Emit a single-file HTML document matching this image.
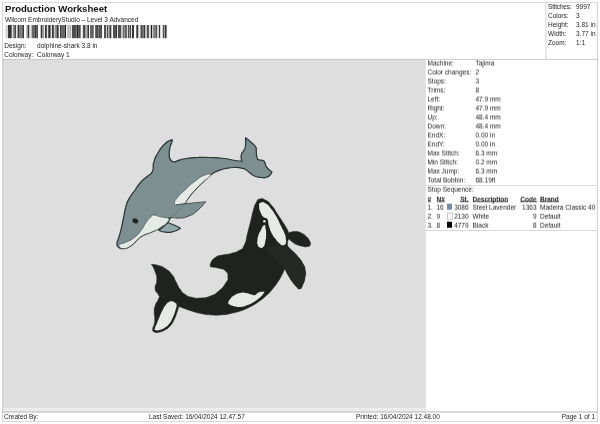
<!DOCTYPE html>
<html>
<head>
<meta charset="utf-8">
<title>Production Worksheet</title>
<style>
html,body{margin:0;padding:0;}
body{width:600px;height:424px;background:#fff;position:relative;overflow:hidden;
 font-family:"Liberation Sans",sans-serif;color:#222;font-size:6.5px;line-height:9px;}
.abs{position:absolute;}
.t{position:absolute;white-space:nowrap;height:9px;line-height:9px;}
.hl{position:absolute;height:1px;background:#d0d0d0;}
.vl{position:absolute;width:1px;background:#d0d0d0;}
#title{left:5px;top:3px;transform:translateY(-0.3px);font-size:9.6px;font-weight:bold;line-height:12px;height:12px;color:#111;}
#canvas{left:3px;top:59px;width:423px;height:350px;background:#dedede;}
u{text-decoration:none;font-weight:bold;display:inline-block;line-height:9px;background:linear-gradient(#2a2a2a,#2a2a2a) no-repeat 0 7.1px / 100% 0.8px;}
.r{text-align:right;}
.g{position:absolute;left:0;top:0;width:600px;height:424px;transform-origin:300px 212px;will-change:transform;}
</style>
</head>
<body>
<!-- frame -->
<svg class="abs" style="left:0;top:0" width="600" height="424" viewBox="0 0 600 424">
<rect x="3" y="59.3" width="422.6" height="349.1" fill="#dedede"/>
<rect x="3" y="408.4" width="422.6" height="3.2" fill="#ebebeb"/>
<rect x="2.6" y="58.9" width="423" height="0.8" fill="#bdbdbd"/>
<rect x="2.4" y="59" width="0.8" height="352.6" fill="#bdbdbd"/>
<rect x="425" y="59.5" width="0.9" height="352" fill="#e4e4e4"/>
<g fill="#d0d0d0">
<rect x="2" y="2" width="596" height="0.8"/>
<rect x="2" y="2" width="0.9" height="420"/>
<rect x="596.8" y="2" width="1.1" height="420"/>
<rect x="2" y="421" width="596" height="0.8"/>
<rect x="545.4" y="2" width="1.2" height="57.5" fill="#dadada"/>
<rect x="425.6" y="58.9" width="172.4" height="0.9" fill="#c6c6c6"/>
<rect x="426" y="185" width="172" height="0.8"/>
<rect x="426" y="230.1" width="172" height="0.8"/>
</g>
<rect x="2" y="411.5" width="596" height="1" fill="#b4b4b4"/>
</svg>
<svg class="abs" style="left:0;top:0" width="600" height="424" viewBox="0 0 600 424">
<g stroke-linejoin="round" stroke-linecap="round">
<path d="M167.80 222.70C169.87 223.47 169.80 223.17 174.00 225.00C178.20 226.83 178.27 227.13 180.40 228.20C178.17 229.30 178.73 230.17 173.70 231.50C168.67 232.83 170.33 232.63 165.30 232.20C160.27 231.77 160.83 230.87 158.60 230.20C160.07 229.13 159.93 229.50 163.00 227.00C166.07 224.50 166.20 224.13 167.80 222.70Z" fill="#93a7aa" stroke="#2a3534" stroke-width="1.25"/>
<path d="M172.10 140.60C172.47 141.63 172.00 141.20 171.30 143.50C170.60 145.80 170.68 143.67 170.00 147.50C169.32 151.33 169.05 150.97 169.25 155.00C169.45 159.03 169.05 157.33 170.60 159.60C172.15 161.87 171.43 161.47 173.90 161.80C176.37 162.13 174.30 161.62 178.00 160.60C181.70 159.58 178.50 159.78 185.00 158.75C191.50 157.72 189.17 157.92 197.50 157.50C205.83 157.08 201.67 157.25 210.00 157.50C218.33 157.75 214.17 157.25 222.50 158.25C230.83 159.25 228.53 159.50 235.00 160.50C241.47 161.50 239.60 161.00 241.90 161.25C241.68 159.17 240.63 158.55 241.25 155.00C241.87 151.45 242.37 153.52 243.75 150.60C245.13 147.68 244.78 150.53 245.40 146.25C246.02 141.97 245.53 140.58 245.60 137.75C247.48 139.33 247.92 139.45 251.25 142.50C254.58 145.55 253.93 143.98 255.60 146.90C257.27 149.82 255.82 147.92 256.25 151.25C256.68 154.58 256.07 154.07 256.90 156.90C257.73 159.73 256.68 158.52 258.75 159.75C260.82 160.98 261.02 159.48 263.10 160.60C265.18 161.72 263.73 160.80 265.00 163.10C266.27 165.40 264.60 164.57 266.90 167.50C269.20 170.43 270.23 170.43 271.90 171.90C271.27 172.93 271.88 173.22 270.00 175.00C268.12 176.78 269.17 176.42 266.25 177.25C263.33 178.08 265.00 177.83 261.25 177.50C257.50 177.17 258.75 177.72 255.00 176.25C251.25 174.78 252.92 175.18 250.00 173.10C247.08 171.02 249.17 171.67 246.25 170.00C243.33 168.33 245.42 168.93 241.25 168.10C237.08 167.27 239.17 167.28 233.75 167.50C228.33 167.72 230.00 167.72 225.00 168.75C220.00 169.78 223.33 168.68 218.75 170.60C214.17 172.52 216.67 170.53 211.25 174.50C205.83 178.47 207.92 177.33 202.50 182.50C197.08 187.67 199.58 185.00 195.00 190.00C190.42 195.00 192.08 193.17 188.75 197.50C185.42 201.83 188.58 198.17 185.00 203.00C181.42 207.83 182.67 207.17 178.00 212.00C173.33 216.83 174.40 214.17 171.00 217.50C167.60 220.83 171.37 218.60 167.80 222.00C164.23 225.40 165.60 224.40 160.30 227.70C155.00 231.00 157.50 229.40 151.90 231.90C146.30 234.40 148.27 232.70 143.50 235.20C138.73 237.70 140.93 236.60 137.60 239.40C134.27 242.20 136.57 240.97 133.50 243.60C130.43 246.23 132.03 245.63 128.40 247.30C124.77 248.97 125.93 248.70 122.60 248.60C119.27 248.50 120.27 248.67 118.40 247.00C116.53 245.33 117.00 246.40 117.00 243.60C117.00 240.80 117.10 243.07 118.40 238.60C119.70 234.13 119.23 236.90 120.90 230.20C122.57 223.50 121.73 226.32 123.40 218.50C125.07 210.68 123.93 213.45 125.90 206.75C127.87 200.05 126.23 203.98 129.30 198.40C132.37 192.82 131.20 195.47 135.10 190.00C139.00 184.53 136.87 186.58 141.00 182.00C145.13 177.42 143.67 179.83 147.50 176.25C151.33 172.67 150.42 175.83 152.50 171.25C154.58 166.67 152.08 168.33 153.75 162.50C155.42 156.67 154.17 159.58 157.50 153.75C160.83 147.92 159.52 149.45 163.75 145.00C167.98 140.55 167.42 141.87 170.20 140.40C172.98 138.93 171.73 139.57 172.10 140.60Z" fill="#7d8f91" stroke="#2a3534" stroke-width="1.25"/>
<path d="M211.25 174.50C209.17 174.67 210.42 172.75 205.00 175.00C199.58 177.25 201.67 176.25 195.00 181.25C188.33 186.25 190.83 184.58 185.00 190.00C179.17 195.42 181.00 193.17 177.50 197.50C174.00 201.83 174.93 200.50 174.50 203.00C174.07 205.50 175.63 204.33 176.20 205.00C179.13 204.58 182.07 204.17 185.00 203.75C186.25 201.67 185.42 202.08 188.75 197.50C192.08 192.92 190.42 195.00 195.00 190.00C199.58 185.00 197.50 187.08 202.50 182.50C207.50 177.92 207.08 178.92 210.00 176.25C212.92 173.58 210.83 175.08 211.25 174.50Z" fill="#e6eae4" stroke="#2a3534" stroke-width="0.5"/>
<path d="M154.40 215.10C157.50 215.10 155.57 215.80 160.30 216.80C165.03 217.80 165.83 217.67 168.60 218.10C168.33 219.33 170.57 218.60 167.80 221.80C165.03 225.00 165.60 224.33 160.30 227.70C155.00 231.07 157.50 229.40 151.90 231.90C146.30 234.40 148.27 232.70 143.50 235.20C138.73 237.70 140.93 236.60 137.60 239.40C134.27 242.20 136.57 240.97 133.50 243.60C130.43 246.23 132.03 245.63 128.40 247.30C124.77 248.97 125.67 248.83 122.60 248.60C119.53 248.37 120.33 247.27 119.20 246.60C119.47 245.87 117.48 245.97 120.00 244.40C122.52 242.83 121.72 244.40 126.75 241.90C131.78 239.40 130.08 241.07 135.10 236.90C140.12 232.73 138.17 234.13 141.80 229.40C145.43 224.67 142.93 226.90 146.00 222.70C149.07 218.50 148.20 219.33 151.00 216.80C153.80 214.27 151.30 215.10 154.40 215.10Z" fill="#e6eae4" stroke="#2a3534" stroke-width="0.5"/>
<path d="M176.20 205.00C179.13 204.58 178.73 204.48 185.00 203.75C191.27 203.02 188.07 203.48 195.00 202.80C201.93 202.12 202.20 202.07 205.80 201.70C202.90 204.77 202.80 206.13 197.10 210.90C191.40 215.67 194.27 213.60 188.70 216.00C183.13 218.40 185.97 217.57 180.40 218.10C174.83 218.63 175.93 217.60 172.00 217.60C168.07 217.60 169.73 217.93 168.60 218.10C169.73 216.07 169.47 216.37 172.00 212.00C174.53 207.63 174.80 207.33 176.20 205.00Z" fill="#7d8f91"/>
<path d="M176.20 205.00C179.13 204.58 178.73 204.48 185.00 203.75C191.27 203.02 188.07 203.48 195.00 202.80C201.93 202.12 202.20 202.07 205.80 201.70C202.90 204.77 202.80 206.13 197.10 210.90C191.40 215.67 194.27 213.60 188.70 216.00C183.13 218.40 185.97 217.57 180.40 218.10C174.83 218.63 175.93 217.60 172.00 217.60C168.07 217.60 169.73 217.93 168.60 218.10" fill="none" stroke="#2a3534" stroke-width="0.8"/>
<path d="M183.70 205.00C182.47 206.17 182.23 206.23 180.00 208.50C177.77 210.77 179.17 209.47 177.00 211.80C174.83 214.13 175.50 213.67 173.50 215.50C171.50 217.33 171.83 216.70 171.00 217.30" fill="none" stroke="#5f7173" stroke-width="0.6"/>
<ellipse cx="135.3" cy="220.9" rx="3.0" ry="2.4" fill="#1f2423" transform="rotate(25 135.3 220.9)"/>
<path d="M259.90 199.10C263.03 198.20 261.57 197.93 265.50 200.10C269.43 202.27 267.60 200.77 271.70 205.60C275.80 210.43 273.77 208.57 277.80 214.60C281.83 220.63 280.60 218.63 283.80 223.70C287.00 228.77 285.80 226.70 287.40 229.80C289.00 232.90 288.20 231.93 288.60 233.00C289.57 232.63 289.13 232.37 291.50 231.90C293.87 231.43 292.50 231.27 295.70 231.60C298.90 231.93 297.50 231.20 301.10 232.90C304.70 234.60 303.67 234.00 306.50 236.70C309.33 239.40 308.33 238.37 309.60 241.00C310.87 243.63 310.97 242.73 310.30 244.60C309.63 246.47 310.30 246.07 307.60 246.60C304.90 247.13 305.83 246.87 302.20 246.20C298.57 245.53 299.97 246.00 296.70 244.60C293.43 243.20 295.10 243.93 292.40 242.00C289.70 240.07 289.87 239.87 288.60 238.80C288.27 240.93 286.83 241.63 287.60 245.20C288.37 248.77 287.63 245.90 290.90 249.50C294.17 253.10 293.43 251.33 297.40 256.00C301.37 260.67 300.23 258.97 302.80 263.50C305.37 268.03 304.33 265.07 305.10 269.60C305.87 274.13 305.87 272.07 305.10 277.10C304.33 282.13 304.57 280.77 302.80 284.70C301.03 288.63 302.07 288.40 299.80 288.90C297.53 289.40 298.53 288.63 296.00 286.20C293.47 283.77 294.73 285.13 292.20 281.60C289.67 278.07 290.90 279.87 288.40 275.60C285.90 271.33 285.93 271.07 284.70 268.80C283.67 271.07 284.13 270.83 281.60 275.60C279.07 280.37 280.37 278.33 277.10 283.10C273.83 287.87 275.57 285.60 271.80 289.90C268.03 294.20 270.33 291.97 265.80 296.00C261.27 300.03 263.73 298.23 258.20 302.00C252.67 305.77 255.23 304.27 249.20 307.30C243.17 310.33 246.17 309.07 240.10 311.10C234.03 313.13 236.87 312.17 231.00 313.40C225.13 314.63 228.93 314.27 222.50 314.80C216.07 315.33 218.93 315.43 211.70 315.00C204.47 314.57 208.03 315.00 200.80 313.50C193.57 312.00 197.30 312.83 190.00 310.50C182.70 308.17 182.60 307.83 178.90 306.50C178.13 308.87 178.17 309.27 176.60 313.60C175.03 317.93 176.37 315.37 174.20 319.50C172.03 323.63 173.23 322.47 170.10 326.00C166.97 329.53 168.53 328.03 164.80 330.10C161.07 332.17 162.43 331.60 158.90 332.20C155.37 332.80 156.27 333.00 154.20 331.90C152.13 330.80 152.70 331.47 152.70 328.90C152.70 326.33 153.53 327.73 154.20 324.20C154.87 320.67 154.70 322.63 154.70 318.30C154.70 313.97 154.00 315.53 154.20 311.20C154.40 306.87 154.13 308.83 155.30 305.30C156.47 301.77 156.30 303.53 157.70 300.60C159.10 297.67 158.90 297.87 159.50 296.50C158.87 295.50 159.07 296.17 157.60 293.50C156.13 290.83 155.38 292.97 155.10 288.50C154.82 284.03 156.75 285.68 156.75 280.10C156.75 274.52 156.88 277.05 155.10 271.75C153.32 266.45 152.63 266.72 151.40 264.20C153.73 264.60 153.83 264.00 158.40 265.40C162.97 266.80 160.63 265.43 165.10 268.40C169.57 271.37 168.17 269.83 171.80 274.30C175.43 278.77 173.20 276.80 176.00 281.80C178.80 286.80 177.13 285.10 180.20 289.30C183.27 293.50 181.30 291.77 185.20 294.40C189.10 297.03 186.87 296.00 191.90 297.20C196.93 298.40 194.13 298.40 200.30 298.00C206.47 297.60 204.27 298.33 210.40 296.00C216.53 293.67 213.70 295.17 218.70 291.00C223.70 286.83 222.33 288.23 225.40 283.50C228.47 278.77 227.90 281.00 227.90 276.80C227.90 272.60 228.17 273.70 225.40 270.90C222.63 268.10 224.53 269.73 219.60 268.40C214.67 267.07 213.60 267.40 210.60 266.90C210.73 265.43 209.20 265.77 211.00 262.50C212.80 259.23 212.17 259.60 216.00 257.10C219.83 254.60 217.43 256.23 222.50 255.00C227.57 253.77 225.77 254.87 231.20 253.40C236.63 251.93 234.47 253.33 238.80 250.60C243.13 247.87 241.20 251.30 244.20 245.20C247.20 239.10 245.57 240.63 247.80 232.30C250.03 223.97 249.13 227.27 250.90 220.20C252.67 213.13 251.37 216.90 253.10 211.10C254.83 205.30 253.83 206.80 256.10 202.80C258.37 198.80 256.77 200.00 259.90 199.10Z" fill="#1f221e" stroke="#1f221e" stroke-width="0.5"/>
<path d="M264.10 248.60C266.63 247.90 265.53 247.40 271.70 246.50C277.87 245.60 277.33 246.27 282.60 245.90C287.87 245.53 285.87 245.57 287.50 245.40C288.63 246.77 287.60 245.97 290.90 249.50C294.20 253.03 293.43 251.33 297.40 256.00C301.37 260.67 300.23 258.97 302.80 263.50C305.37 268.03 304.33 265.07 305.10 269.60C305.87 274.13 305.87 272.07 305.10 277.10C304.33 282.13 304.57 280.77 302.80 284.70C301.03 288.63 300.80 287.50 299.80 288.90C298.53 288.00 298.53 288.63 296.00 286.20C293.47 283.77 294.73 285.13 292.20 281.60C289.67 278.07 290.90 279.87 288.40 275.60C285.90 271.33 285.93 271.07 284.70 268.80C283.13 267.20 284.23 268.10 280.00 264.00C275.77 259.90 277.30 261.63 272.00 256.50C266.70 251.37 266.73 251.23 264.10 248.60Z" fill="#252925"/>
<path d="M260.70 202.80C258.53 203.80 259.20 203.30 259.20 206.60C259.20 209.90 259.20 209.17 260.70 212.70C262.20 216.23 261.43 214.70 263.70 217.20C265.97 219.70 265.73 217.18 267.50 220.20C269.27 223.22 267.50 221.72 269.00 226.25C270.50 230.78 269.80 229.55 272.00 233.80C274.20 238.05 273.17 235.87 275.60 239.00C278.03 242.13 276.77 241.13 279.30 243.20C281.83 245.27 281.03 245.27 283.20 245.20C285.37 245.13 284.90 245.03 285.80 243.00C286.70 240.97 286.27 242.17 285.90 239.10C285.53 236.03 286.37 238.23 284.70 233.80C283.03 229.37 283.80 231.73 280.90 225.80C278.00 219.87 279.37 221.80 276.00 216.00C272.63 210.20 274.23 212.53 270.80 208.40C267.37 204.27 269.07 205.47 265.70 203.60C262.33 201.73 262.87 201.80 260.70 202.80Z" fill="#e6eae4"/>
<path d="M264.00 225.20C262.37 225.87 262.57 227.07 260.70 230.50C258.83 233.93 259.50 232.00 258.40 235.50C257.30 239.00 257.67 238.00 257.40 241.00C257.13 244.00 256.77 242.33 257.60 244.50C258.43 246.67 258.00 246.73 259.90 247.50C261.80 248.27 261.50 248.83 263.30 246.80C265.10 244.77 264.37 245.33 265.30 241.40C266.23 237.47 266.00 239.30 266.10 235.00C266.20 230.70 266.30 231.77 265.60 228.50C264.90 225.23 265.63 224.53 264.00 225.20Z" fill="#e6eae4"/>
<path d="M228.30 302.80C228.57 300.93 228.37 301.43 230.30 299.00C232.23 296.57 230.83 297.50 234.10 295.50C237.37 293.50 236.10 293.83 240.10 293.00C244.10 292.17 242.33 292.50 246.10 293.00C249.87 293.50 248.37 293.87 251.40 294.50C254.43 295.13 252.67 295.67 255.20 294.90C257.73 294.13 255.87 293.23 259.00 292.20C262.13 291.17 262.73 291.93 264.60 291.80C264.00 292.70 264.67 292.33 262.80 294.50C260.93 296.67 262.03 295.80 259.00 298.30C255.97 300.80 257.47 299.77 253.70 302.00C249.93 304.23 252.23 303.37 247.70 305.00C243.17 306.63 244.90 306.53 240.10 306.90C235.30 307.27 236.83 306.87 233.30 306.10C229.77 305.33 231.17 305.70 229.50 304.60C227.83 303.50 228.03 304.67 228.30 302.80Z" fill="#e6eae4"/>
<path d="M171.80 301.20C173.77 301.60 173.80 301.63 175.40 303.00C177.00 304.37 176.60 302.77 176.60 305.30C176.60 307.83 176.60 306.67 175.40 310.60C174.20 314.53 174.97 312.77 173.00 317.10C171.03 321.43 172.23 320.07 169.50 323.60C166.77 327.13 168.13 325.60 164.80 327.70C161.47 329.80 162.67 329.10 159.50 329.90C156.33 330.70 156.77 330.83 155.30 330.10C153.83 329.37 154.50 330.07 155.10 327.70C155.70 325.33 155.63 326.53 157.10 323.00C158.57 319.47 157.73 321.23 159.50 317.10C161.27 312.97 160.27 314.73 162.40 310.60C164.53 306.47 163.53 307.63 165.90 304.70C168.27 301.77 167.53 302.97 169.50 301.80C171.47 300.63 169.83 300.80 171.80 301.20Z" fill="#e6eae4"/>
<circle cx="264.5" cy="221.1" r="3.3" fill="#1f221e"/><circle cx="264.4" cy="221.2" r="1.25" fill="#e2e6e0"/>
</g></svg>

<div class="g" id="ghead" style="transform:translate(0px,0px) rotate(0.004deg);">
<!-- header -->
<div id="title" class="t">Production Worksheet</div>
<div class="t" style="left:5px;top:14.5px;">Wilcom EmbroideryStudio – Level 3 Advanced</div>
<svg class="abs" style="left:0;top:0" width="600" height="424" viewBox="0 0 600 424"><g fill="#1c1c1c" shape-rendering="auto"><rect x="5.5" y="25" width="1.3" height="13.2" opacity="0.22"/><rect x="7.8" y="25" width="3.9" height="13.2" opacity="0.89"/><rect x="11.7" y="25" width="1.4" height="13.2" opacity="0.11"/><rect x="13.1" y="25" width="1.4" height="13.2" opacity="0.56"/><rect x="14.5" y="25" width="1.4" height="13.2" opacity="0.89"/><rect x="15.9" y="25" width="1.7" height="13.2" opacity="0.11"/><rect x="17.6" y="25" width="1.4" height="13.2" opacity="0.89"/><rect x="19.0" y="25" width="1.4" height="13.2" opacity="0.56"/><rect x="20.4" y="25" width="1.1" height="13.2" opacity="0.78"/><rect x="21.5" y="25" width="0.8" height="13.2" opacity="0.56"/><rect x="22.3" y="25" width="1.7" height="13.2" opacity="0.89"/><rect x="26.4" y="25" width="1.4" height="13.2" opacity="0.44"/><rect x="27.8" y="25" width="1.4" height="13.2" opacity="0.89"/><rect x="29.2" y="25" width="2.4" height="13.2" opacity="0.11"/><rect x="31.6" y="25" width="3.2" height="13.2" opacity="0.67"/><rect x="34.8" y="25" width="1.7" height="13.2" opacity="0.89"/><rect x="36.5" y="25" width="1.5" height="13.2" opacity="0.78"/><rect x="40.7" y="25" width="1.4" height="13.2" opacity="0.89"/><rect x="42.1" y="25" width="1.9" height="13.2" opacity="0.44"/><rect x="44.0" y="25" width="1.0" height="13.2" opacity="0.11"/><rect x="45.0" y="25" width="1.8" height="13.2" opacity="0.89"/><rect x="46.8" y="25" width="1.4" height="13.2" opacity="0.11"/><rect x="48.2" y="25" width="2.4" height="13.2" opacity="0.89"/><rect x="50.6" y="25" width="1.4" height="13.2" opacity="0.11"/><rect x="52.0" y="25" width="1.8" height="13.2" opacity="0.89"/><rect x="53.8" y="25" width="1.4" height="13.2" opacity="0.22"/><rect x="55.2" y="25" width="1.8" height="13.2" opacity="0.56"/><rect x="57.0" y="25" width="1.7" height="13.2" opacity="0.89"/><rect x="60.0" y="25" width="1.5" height="13.2" opacity="0.89"/><rect x="61.5" y="25" width="3.1" height="13.2" opacity="0.67"/><rect x="64.6" y="25" width="1.4" height="13.2" opacity="1.00"/><rect x="67.4" y="25" width="1.1" height="13.2" opacity="0.44"/><rect x="68.5" y="25" width="1.0" height="13.2" opacity="0.22"/><rect x="69.5" y="25" width="1.5" height="13.2" opacity="0.33"/><rect x="71.0" y="25" width="1.0" height="13.2" opacity="0.11"/><rect x="72.0" y="25" width="4.2" height="13.2" opacity="0.78"/><rect x="76.2" y="25" width="0.7" height="13.2" opacity="0.56"/><rect x="76.9" y="25" width="1.4" height="13.2" opacity="1.00"/><rect x="78.3" y="25" width="2.4" height="13.2" opacity="0.78"/><rect x="82.8" y="25" width="2.6" height="13.2" opacity="0.78"/><rect x="85.4" y="25" width="2.1" height="13.2" opacity="0.33"/><rect x="87.5" y="25" width="1.4" height="13.2" opacity="1.00"/><rect x="90.0" y="25" width="3.8" height="13.2" opacity="0.67"/><rect x="95.2" y="25" width="2.8" height="13.2" opacity="0.78"/><rect x="98.0" y="25" width="1.0" height="13.2" opacity="0.56"/><rect x="99.0" y="25" width="1.4" height="13.2" opacity="0.78"/><rect x="100.4" y="25" width="1.4" height="13.2" opacity="1.00"/><rect x="104.0" y="25" width="2.0" height="13.2" opacity="0.78"/><rect x="106.0" y="25" width="1.0" height="13.2" opacity="0.22"/><rect x="107.0" y="25" width="1.1" height="13.2" opacity="0.78"/><rect x="108.1" y="25" width="1.4" height="13.2" opacity="0.33"/><rect x="109.5" y="25" width="1.8" height="13.2" opacity="0.89"/><rect x="113.0" y="25" width="2.5" height="13.2" opacity="0.78"/><rect x="115.5" y="25" width="1.4" height="13.2" opacity="1.00"/><rect x="116.9" y="25" width="1.1" height="13.2" opacity="0.11"/><rect x="118.0" y="25" width="3.0" height="13.2" opacity="0.78"/><rect x="121.0" y="25" width="1.8" height="13.2" opacity="0.22"/><rect x="122.8" y="25" width="1.4" height="13.2" opacity="0.67"/><rect x="124.2" y="25" width="1.0" height="13.2" opacity="0.44"/><rect x="125.2" y="25" width="1.5" height="13.2" opacity="0.89"/><rect x="127.8" y="25" width="1.2" height="13.2" opacity="0.78"/><rect x="129.0" y="25" width="0.8" height="13.2" opacity="0.44"/><rect x="129.8" y="25" width="1.1" height="13.2" opacity="0.89"/><rect x="130.9" y="25" width="1.1" height="13.2" opacity="0.11"/><rect x="132.0" y="25" width="2.0" height="13.2" opacity="0.89"/><rect x="136.3" y="25" width="1.9" height="13.2" opacity="0.89"/><rect x="138.2" y="25" width="2.3" height="13.2" opacity="0.11"/><rect x="140.5" y="25" width="2.3" height="13.2" opacity="0.78"/><rect x="142.8" y="25" width="0.8" height="13.2" opacity="0.56"/><rect x="143.6" y="25" width="1.5" height="13.2" opacity="0.89"/><rect x="145.1" y="25" width="1.9" height="13.2" opacity="0.22"/><rect x="147.0" y="25" width="1.9" height="13.2" opacity="0.78"/><rect x="148.9" y="25" width="1.9" height="13.2" opacity="0.11"/><rect x="150.8" y="25" width="1.2" height="13.2" opacity="1.00"/><rect x="152.0" y="25" width="1.1" height="13.2" opacity="0.22"/><rect x="153.1" y="25" width="3.1" height="13.2" opacity="0.56"/><rect x="156.2" y="25" width="0.9" height="13.2" opacity="0.89"/><rect x="157.1" y="25" width="1.8" height="13.2" opacity="0.11"/><rect x="158.9" y="25" width="1.3" height="13.2" opacity="0.89"/><rect x="162.7" y="25" width="1.6" height="13.2" opacity="0.78"/><rect x="164.3" y="25" width="0.7" height="13.2" opacity="0.33"/><rect x="165.0" y="25" width="1.6" height="13.2" opacity="0.89"/></g></svg>
<div class="t" style="left:4px;top:40px;transform:translate(0.3px,0.7px)">Design:</div>
<div class="t" style="left:37px;top:40px;transform:translate(0.1px,0.7px)">dolphine-shark 3.8 in</div>
<div class="t" style="left:4px;top:49px;transform:translate(0.3px,0.7px)">Colorway:</div>
<div class="t" style="left:37px;top:49px;transform:translate(0.1px,0.7px)">Colorway 1</div>

</div>
<div class="g" id="gtr" style="transform:translate(0px,0px) rotate(0.004deg);">
<!-- top right -->
<div class="t" style="left:548px;top:2px;letter-spacing:-0.15px;">Stitches:</div><div class="t" style="left:576px;top:2px;">9997</div>
<div class="t" style="left:548px;top:11px;">Colors:</div><div class="t" style="left:576px;top:11px;">3</div>
<div class="t" style="left:548px;top:20px;">Height:</div><div class="t" style="left:576px;top:20px;">3.81 in</div>
<div class="t" style="left:548px;top:29px;">Width:</div><div class="t" style="left:576px;top:29px;">3.77 in</div>
<div class="t" style="left:548px;top:38px;">Zoom:</div><div class="t" style="left:576px;top:38px;">1:1</div>

</div>
<div class="g" id="gmach" style="transform:translate(0px,-0.5px) rotate(0.004deg);">
<!-- machine info -->
<div class="t" style="left:427.5px;top:59px;">Machine:</div><div class="t" style="left:475.5px;top:59px;">Tajima</div>
<div class="t" style="left:427.5px;top:68px;">Color changes:</div><div class="t" style="left:475.5px;top:68px;">2</div>
<div class="t" style="left:427.5px;top:77px;">Stops:</div><div class="t" style="left:475.5px;top:77px;">3</div>
<div class="t" style="left:427.5px;top:86px;">Trims:</div><div class="t" style="left:475.5px;top:86px;">8</div>
<div class="t" style="left:427.5px;top:95px;">Left:</div><div class="t" style="left:475.5px;top:95px;">47.9 mm</div>
<div class="t" style="left:427.5px;top:104px;">Right:</div><div class="t" style="left:475.5px;top:104px;">47.9 mm</div>
<div class="t" style="left:427.5px;top:113px;">Up:</div><div class="t" style="left:475.5px;top:113px;">48.4 mm</div>
<div class="t" style="left:427.5px;top:122px;">Down:</div><div class="t" style="left:475.5px;top:122px;">48.4 mm</div>
<div class="t" style="left:427.5px;top:131px;">EndX:</div><div class="t" style="left:475.5px;top:131px;">0.00 in</div>
<div class="t" style="left:427.5px;top:140px;">EndY:</div><div class="t" style="left:475.5px;top:140px;">0.00 in</div>
<div class="t" style="left:427.5px;top:149px;">Max Stitch:</div><div class="t" style="left:475.5px;top:149px;">6.3 mm</div>
<div class="t" style="left:427.5px;top:158px;">Min Stitch:</div><div class="t" style="left:475.5px;top:158px;">0.2 mm</div>
<div class="t" style="left:427.5px;top:167px;">Max Jump:</div><div class="t" style="left:475.5px;top:167px;">6.3 mm</div>
<div class="t" style="left:427.5px;top:176px;">Total Bobbin:</div><div class="t" style="left:475.5px;top:176px;">68.19ft</div>

</div>
<div class="g" id="gstop" style="transform:translate(0px,-0.3px) rotate(0.004deg);">
<!-- stop sequence -->
<div class="t" style="left:427.5px;top:185px;">Stop Sequence:</div>
<div class="t" style="left:427.5px;top:194px;transform:translateY(0.5px);"><u>#</u></div>
<div class="t" style="left:436.5px;top:194px;transform:translateY(0.5px);"><u>N#</u></div>
<div class="t r" style="left:440px;width:28.6px;top:194px;transform:translateY(0.5px);"><u>St.</u></div>
<div class="t" style="left:472.5px;top:194px;transform:translateY(0.5px);"><u>Description</u></div>
<div class="t r" style="left:500px;width:36.5px;top:194px;transform:translateY(0.5px);"><u>Code</u></div>
<div class="t" style="left:540px;top:194px;transform:translateY(0.5px);"><u>Brand</u></div>

<div class="t" style="left:427.5px;top:203px;">1.</div>
<div class="t" style="left:436.5px;top:203px;">16</div>
<div class="abs" style="left:446.5px;top:204.2px;width:5.6px;height:5.4px;background:#788aa4;"></div>
<div class="t r" style="left:440px;width:28.6px;top:203px;">3086</div>
<div class="t" style="left:472.5px;top:203px;">Steel Lavender</div>
<div class="t r" style="left:500px;width:36.5px;top:203px;">1363</div>
<div class="t" style="left:540px;top:203px;">Madeira Classic 40</div>

<div class="t" style="left:427.5px;top:212px;">2.</div>
<div class="t" style="left:436.5px;top:212px;">9</div>
<div class="abs" style="left:446.5px;top:213.2px;width:4.8px;height:4.6px;background:#fff;border:0.4px solid #c6c6c6;"></div>
<div class="t r" style="left:440px;width:28.6px;top:212px;">2130</div>
<div class="t" style="left:472.5px;top:212px;">White</div>
<div class="t r" style="left:500px;width:36.5px;top:212px;">9</div>
<div class="t" style="left:540px;top:212px;">Default</div>

<div class="t" style="left:427.5px;top:221px;">3.</div>
<div class="t" style="left:436.5px;top:221px;">8</div>
<div class="abs" style="left:446.5px;top:222.2px;width:5.6px;height:5.4px;background:#050505;"></div>
<div class="t r" style="left:440px;width:28.6px;top:221px;">4779</div>
<div class="t" style="left:472.5px;top:221px;">Black</div>
<div class="t r" style="left:500px;width:36.5px;top:221px;">8</div>
<div class="t" style="left:540px;top:221px;">Default</div>

</div>
<div class="g" id="gfoot" style="transform:translate(0px,0px) rotate(0.004deg);">
<!-- footer -->
<div class="t" style="left:4px;top:412px;">Created By:</div>
<div class="t" style="left:149px;top:412px;">Last Saved: 16/04/2024 12.47.57</div>
<div class="t" style="left:356px;top:412px;">Printed: 16/04/2024 12.48.00</div>
<div class="t r" style="left:540px;width:55px;top:412px;">Page 1 of 1</div>
</div>
</body>
</html>
